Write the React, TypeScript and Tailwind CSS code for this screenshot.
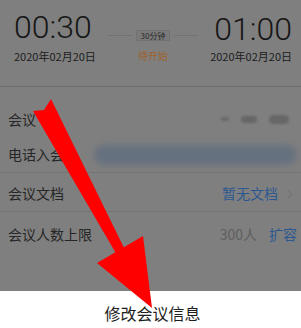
import { ChevronRight } from "lucide-react";

const font = { fontFamily: '"Noto Sans CJK SC", "Noto Sans", sans-serif' };
const digits = { fontFamily: 'Roboto, "Noto Sans", sans-serif' };

function TimeBlock({ time, date, align, gap }: { time: string; date: string; align: "start" | "end"; gap: string }) {
  return (
    <div className={align === "start" ? "flex flex-col items-start" : "flex flex-col items-end"}>
      <p className="text-[32px] font-light leading-[36px] text-[#161616]" style={digits}>
        {time}
      </p>
      <p className={`${gap} text-[11px] leading-[16px] text-[#1c1c1c]`}>{date}</p>
    </div>
  );
}

function Row({ label, children, border }: { label: string; children?: React.ReactNode; border?: boolean }) {
  return (
    <div
      className={
        border
          ? "relative flex items-center h-[36px] pl-[8px] pr-[4px] border-b border-[#747474]"
          : "relative flex items-center h-[36px] pl-[8px] pr-[4px]"
      }
    >
      <span className="text-[14px] text-[#262626]">{label}</span>
      <div className="ml-auto flex items-center">{children}</div>
    </div>
  );
}

export default function App() {
  return (
    <div className="relative w-[301px] h-[328px] overflow-hidden bg-white" style={font}>
      <div className="h-[291px] bg-[#7f7f7f] flex flex-col">
        <div className="h-[87px] border-b border-[#6d6d6d] flex items-start justify-between pl-[14px] pr-[9px] pt-[9px]">
          <TimeBlock time="00:30" date="2020年02月20日" align="start" gap="mt-[3px]" />
          <div className="flex flex-col items-center pt-[21px]">
            <div className="flex items-center gap-[4px]">
              <div className="w-[24px] h-px bg-[#727272]" />
              <div className="border border-[#727272] bg-[#7a7a7a] px-[4px] text-[8px] leading-[9px] text-[#2a2a2a]">
                30分钟
              </div>
              <div className="w-[24px] h-px bg-[#727272]" />
            </div>
            <p className="mt-[10px] text-[10px] leading-none text-[#a0622b]">待开始</p>
          </div>
          <div className="pt-[2px]">
            <TimeBlock time="01:00" date="2020年02月20日" align="end" gap="mt-[1px]" />
          </div>
        </div>

        <div className="pt-[14px]">
          <Row label="会议">
            <div className="flex items-center gap-[12px] pr-[8px]">
              <div className="w-[8px] h-[4px] rounded-full bg-[#6a6a6a] blur-[1px]" />
              <div className="w-[16px] h-[7px] rounded-full bg-[#676767] blur-[1px]" />
              <div className="w-[20px] h-[9px] rounded-full bg-[#676767] blur-[1px]" />
            </div>
          </Row>
          <Row label="电话入会" border>
            <div className="absolute left-[94px] right-[4px] top-[8px] h-[20px] rounded-full bg-[#66717f] blur-[3px]" />
          </Row>
          <div className="h-[3px]" />
          <Row label="会议文档" border>
            <span className="text-[14px] text-[#2c5891]">暂无文档</span>
            <ChevronRight size={14} strokeWidth={1.5} className="ml-[5px] text-[#6c6c6c]" />
          </Row>
          <div className="h-[4px]" />
          <Row label="会议人数上限">
            <span className="text-[14px] text-[#5e5e5e]">300人</span>
            <span className="ml-[12px] text-[14px] text-[#2c5891]">扩容</span>
          </Row>
        </div>
      </div>

      <div className="h-[37px] flex items-center justify-center pt-[7px]">
        <span className="text-[16px] text-[#1e1e1e] pl-[4px]">修改会议信息</span>
      </div>

      <svg className="absolute inset-0 pointer-events-none" width="301" height="328" viewBox="0 0 301 328">
        <polygon points="33,111 44,110 51,99 128,256 121,262" fill="#ff0000" />
        <polygon points="97,263 143,236 152,308" fill="#ff0000" />
      </svg>
    </div>
  );
}
